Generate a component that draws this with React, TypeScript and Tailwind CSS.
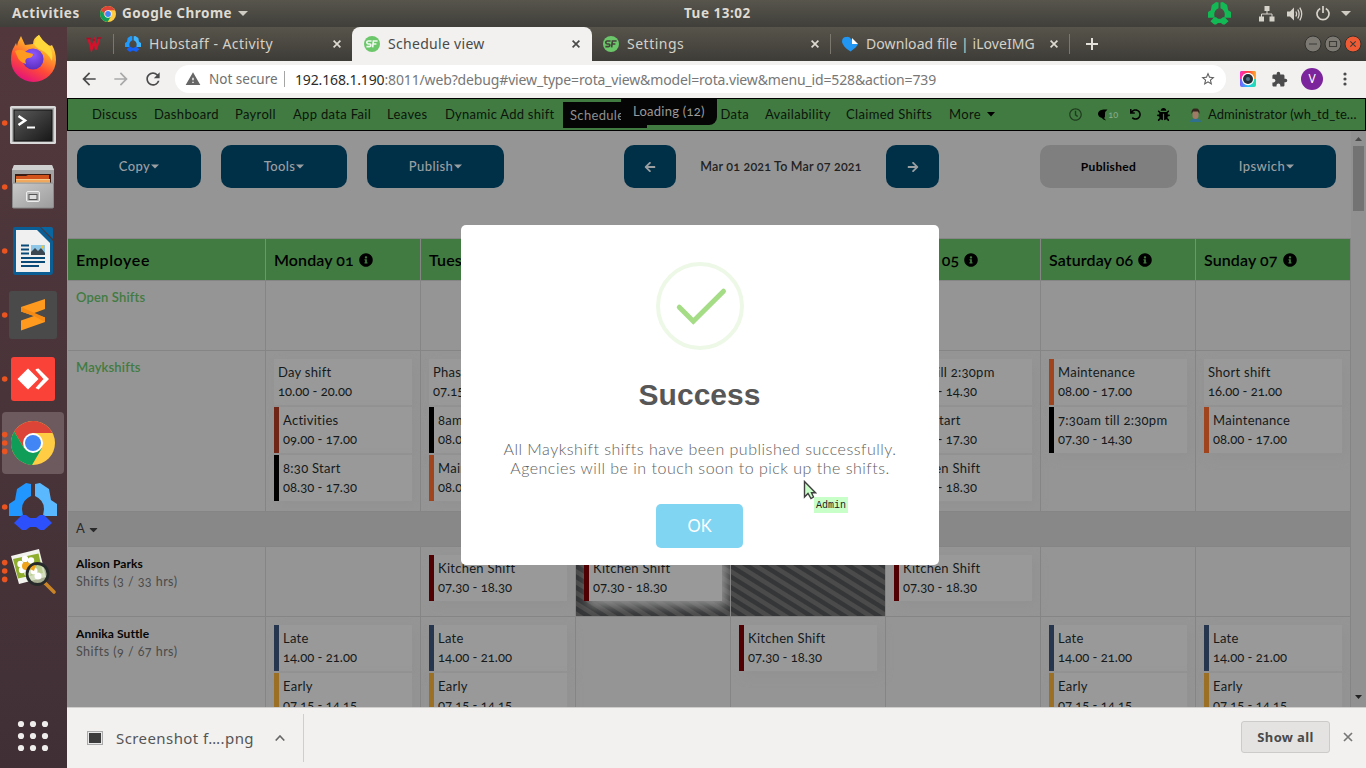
import React from "react";
import {
  FaArrowLeft,
  FaArrowRight,
  FaBug,
  FaCaretDown,
  FaInfoCircle,
  FaRegClock,
  FaUndo,
} from "react-icons/fa";
import { MdArrowBack, MdArrowForward, MdExtension, MdRefresh, MdStarBorder, MdWarning } from "react-icons/md";

const ubuntu = "font-['Noto_Sans','Open_Sans',sans-serif]";
const raleway = "font-['Lato',sans-serif]";

/* ---------- Logos ---------- */

function ChromeMark() {
  return (
    <>
      <circle cx="22" cy="22" r="22" fill="#fc4" />
      <path d="M22 12 H41.6 L38 7 A22 22 0 0 0 3.2 10.6 L13 27 Z" fill="#db4437" />
      <path d="M3.2 10.6 A22 22 0 0 0 21 44 L31 27 L22 31 L13 27 Z" fill="#0f9d58" />
      <circle cx="22" cy="22" r="10" fill="#fff" />
      <circle cx="22" cy="22" r="8" fill="#4285f4" />
    </>
  );
}

function RingMark({ a, b, c }: { a: string; b: string; c: string }) {
  return (
    <>
      <path d="M8 6 L17 0 L22 1 V13 Q13 17 13 26 L14 33 H0 V21 L6 17 Z" fill={a} />
      <path d="M40 6 L31 0 L26 1 V13 Q35 17 35 26 L34 33 H48 V21 L42 17 Z" fill={b} />
      <path d="M5 40 L13 32 H17 L21 35 H27 L31 32 H35 L43 40 L35 47 H31 L27 44 H21 L17 47 H13 Z" fill={c} />
    </>
  );
}

function Ring({ size, a, b, c }: { size: number; a: string; b: string; c: string }) {
  return (
    <svg width={size} height={size} viewBox="0 0 48 48" className="shrink-0">
      <RingMark a={a} b={b} c={c} />
    </svg>
  );
}

function SfLogo({ dark }: { dark?: boolean }) {
  return (
    <svg width="16" height="16" viewBox="0 0 16 16" className="shrink-0">
      <circle cx="8" cy="8" r="8" fill="#6cc76a" />
      <path
        d="M7.6 5 H4 Q2.7 5.2 2.8 6.6 Q3 8 4.5 8 H6 Q7 8.2 6.8 9.4 Q6.6 10.6 5.4 10.6 H2.4 M8.6 11.4 L9.4 5 H13.6 M9.2 8 H12.4"
        fill="none"
        stroke={dark ? "#46443d" : "#eefaee"}
        strokeWidth="1.7"
      />
    </svg>
  );
}

function Cross({ color }: { color: string }) {
  return (
    <svg width="8" height="8" viewBox="0 0 8 8" className="shrink-0">
      <path d="M0.6 0.6 L7.4 7.4 M7.4 0.6 L0.6 7.4" stroke={color} strokeWidth="1.7" />
    </svg>
  );
}

/* ---------- Desktop top bar ---------- */

function TopBar() {
  return (
    <header
      className={`flex h-[27px] shrink-0 items-center bg-gradient-to-b from-[#57554c] to-[#403f3a] text-[13.5px] font-bold tracking-[0.5px] text-[#dfdbd2] ${ubuntu}`}
    >
      <div className="w-[100px] pl-3">Activities</div>
      <svg width="16" height="16" viewBox="0 0 44 44" className="shrink-0">
        <ChromeMark />
      </svg>
      <div className="ml-1.5 w-[116px] whitespace-nowrap">Google Chrome</div>
      <svg width="10" height="5" viewBox="0 0 10 5">
        <path d="M0 0 H10 L5 5 Z" fill="#cfccc4" />
      </svg>
      <div className="ml-[436px] w-[520px]">Tue 13:02</div>
      <div className="ml-[3.5px] flex w-[51px]">
        <Ring size={23} a="#12b955" b="#12b955" c="#12b955" />
      </div>
      <div className="flex items-center">
        <svg width="16" height="16" viewBox="0 0 16 16">
          <path d="M5.5 0 h5 v5 h-5z M0 10.5 h5 v5 h-5z M10.5 10.5 h5 v5 h-5z" fill="#d6d3cb" />
          <path d="M8 5 V8 M2.5 11 V8 H13 V11" fill="none" stroke="#d6d3cb" />
        </svg>
        <svg width="16" height="14" viewBox="0 0 16 14" className="ml-3">
          <path d="M0 4.5 H3 L7 0.5 V13.5 L3 9.5 H0 Z" fill="#d6d3cb" />
          <path d="M8.8 4.5 Q10.4 7 8.8 9.5 M10.8 2.5 Q13.4 7 10.8 11.5 M12.8 0.6 Q16.6 7 12.8 13.4" fill="none" stroke="#d6d3cb" strokeWidth="1.3" />
        </svg>
        <svg width="14" height="15" viewBox="0 0 14 15" className="ml-[13px]">
          <path d="M4.2 2.4 A6 6 0 1 0 9.8 2.4 M7 0 V7" fill="none" stroke="#d6d3cb" strokeWidth="1.7" />
        </svg>
        <svg width="10" height="5" viewBox="0 0 10 5" className="ml-[11px]">
          <path d="M0 0 H10 L5 5 Z" fill="#cfccc4" />
        </svg>
      </div>
    </header>
  );
}

/* ---------- Dock ---------- */

function Slot({ dots, children }: { dots: number; children: React.ReactNode }) {
  const ys = dots === 1 ? [32] : dots === 3 ? [23.6, 32, 40.4] : [];
  return (
    <svg width="67" height="64" viewBox="0 0 67 64" className="shrink-0">
      {children}
      {ys.map((y) => (
        <circle key={y} cx="4.7" cy={y} r="2.8" fill="#e95420" />
      ))}
    </svg>
  );
}

function Dock() {
  return (
    <nav className="flex w-[67px] shrink-0 flex-col bg-gradient-to-b from-[#52383c] to-[#403036]">
      <Slot dots={0}>
        <defs>
          <linearGradient id="ff" x1="0.8" y1="0" x2="0.3" y2="1">
            <stop offset="0" stopColor="#fff44f" />
            <stop offset="0.35" stopColor="#ffa02a" />
            <stop offset="0.65" stopColor="#ff4a38" />
            <stop offset="1" stopColor="#e3107f" />
          </linearGradient>
          <radialGradient id="ffp" cx="0.5" cy="0.3" r="0.7">
            <stop offset="0" stopColor="#9059ff" />
            <stop offset="1" stopColor="#5b2fc0" />
          </radialGradient>
        </defs>
        <path d="M18 15 L21 9 L25 18 L33 17 Q33 11 39 8 Q42 13 47 17 Q50 20 52 18 Q56 25 56 33 A22.5 22 0 0 1 11 33 Q11 24 14 20 L16 16 L17 19 Z" fill="url(#ff)" />
        <circle cx="33" cy="32" r="10.5" fill="url(#ffp)" />
        <path d="M15 24 Q22 21 26 25 L33 27 Q33 31 28 31 Q24 32 26 37 Q19 35 17 29 Z" fill="#ff9a20" />
        <path d="M34 17 Q36 10 39 8 Q42 14 47 17 Q54 24 52 34 Q48 26 41 23 Q36 21 34 17Z" fill="#ffd83c" />
      </Slot>
      <Slot dots={1}>
        <defs>
          <linearGradient id="tm" x1="0" y1="0" x2="1" y2="1">
            <stop offset="0" stopColor="#5a5a5a" />
            <stop offset="0.5" stopColor="#393939" />
            <stop offset="1" stopColor="#171717" />
          </linearGradient>
        </defs>
        <rect x="10" y="15" width="46" height="38" rx="1.5" fill="#d9d9d9" />
        <rect x="12" y="17" width="42" height="34" fill="#a9a9a9" />
        <rect x="14" y="19" width="38" height="31" fill="url(#tm)" stroke="#111" />
        <path d="M18.5 25 L25 29.5 L18.5 34" fill="none" stroke="#fff" strokeWidth="2.6" />
        <path d="M27 36.5 H35" stroke="#fff" strokeWidth="2" />
      </Slot>
      <Slot dots={1}>
        <defs>
          <linearGradient id="fl" x1="0" y1="0" x2="1" y2="1">
            <stop offset="0" stopColor="#c9c9c9" />
            <stop offset="1" stopColor="#9c9c9c" />
          </linearGradient>
        </defs>
        <path d="M14 10 H52 L54 15 V50 H12 V15 Z" fill="#a2a2a2" />
        <path d="M14 10 H52 L54 15 H12 Z" fill="#cfcfcf" />
        <rect x="15" y="19" width="36" height="10" fill="#3a1c14" />
        <path d="M16 21 H26 L28 20 H49 V29 H16Z" fill="#d2531b" />
        <path d="M16 24 H50 V29 H16Z" fill="#f5c98c" />
        <path d="M16 26 H50" stroke="#e8862f" />
        <rect x="12.5" y="28" width="41" height="25" rx="1" fill="url(#fl)" stroke="#8a8a8a" />
        <rect x="26.5" y="36.5" width="13" height="10" rx="1.5" fill="#bbb" stroke="#ededed" />
        <rect x="29" y="39.5" width="8" height="5" fill="#ddd" stroke="#555" />
      </Slot>
      <Slot dots={1}>
        <path d="M15 8 H40 L53 22 V53 Q53 56 50 56 H16 Q13 56 13 53 V10 Q13 8 15 8Z" fill="#0a5e93" />
        <path d="M16 11 H37 L50 24 V53 H16Z" fill="#f0f0f0" />
        <path d="M41 8 H51 Q53 8 53 10 V20Z" fill="#0a66a0" />
        <path d="M21 26.5 H29 M21 30.5 H29 M21 34.5 H29 M21 39 H45 M21 43 H45 M21 47 H39" stroke="#0a4a78" strokeWidth="2" />
        <rect x="31" y="26" width="14" height="10" fill="#8ec7e8" />
        <path d="M31 36 V33 L35 29 L38 32 L41 29 L45 34 V36Z" fill="#3b4650" />
        <circle cx="42.5" cy="28" r="1.5" fill="#f3c52f" />
      </Slot>
      <Slot dots={1}>
        <rect x="9" y="8" width="48" height="48" rx="3" fill="#4a4a4a" />
        <path d="M21 24 L45 16 V26 L33 30.5 L45 34.5 V39 L21 47.5 V37.5 L34 33 L21 28.5Z" fill="#ff9a1f" />
        <path d="M21 28.5 V24 L45 34.5 V39 L34 33Z" fill="#f58a14" />
      </Slot>
      <Slot dots={1}>
        <rect x="11" y="10" width="44" height="44" rx="3" fill="#fb4238" />
        <path d="M17.5 32 L28 21.5 L38.5 32 L28 42.5Z" fill="#fff" />
        <path d="M36 22 L38.5 21.5 L49 32 L38.5 42.5 L35.5 41 L43.5 32 L35.5 23Z" fill="#fff" />
      </Slot>
      <Slot dots={3}>
        <rect x="2" y="1" width="62" height="62" rx="4" fill="#6d5a5f" />
        <g transform="translate(11 10)">
          <ChromeMark />
        </g>
      </Slot>
      <Slot dots={1}>
        <g transform="translate(9 8)">
          <RingMark a="#2196ff" b="#5ab8ff" c="#2c50fb" />
        </g>
      </Slot>
      <Slot dots={3}>
        <path d="M11 17 L39 10 L46 38 L19 45Z" fill="#f3f3ee" />
        <path d="M13 20 L38.5 14.5 L43 34 L18 39.5Z" fill="#8fae2e" />
        <g fill="#fff">
          <circle cx="25" cy="20" r="3.2" />
          <circle cx="31" cy="21.5" r="3.2" />
          <circle cx="20.5" cy="25" r="3.2" />
          <circle cx="22" cy="31" r="3.2" />
          <circle cx="27.5" cy="34" r="3.2" />
        </g>
        <circle cx="26" cy="27" r="4" fill="#f0a31c" />
        <path d="M45 44 L54 53" stroke="#c98428" strokeWidth="3.6" strokeLinecap="round" />
        <circle cx="37.5" cy="35" r="10.5" fill="#c9d8b0" fillOpacity="0.75" stroke="#272a2a" strokeWidth="2.8" />
        <circle cx="34" cy="32" r="3.5" fill="#fff" />
        <circle cx="38" cy="37" r="3.5" fill="#fff" />
        <path d="M30 30 q2 -4 6 -4 l-2 6z" fill="#f0a31c" />
      </Slot>
      <div className="flex-1" />
      <svg width="67" height="64" viewBox="0 0 67 64" className="shrink-0">
        {[20, 32, 44].map((y) =>
          [21, 33, 45].map((x) => <circle key={`${x}-${y}`} cx={x} cy={y} r="3.1" fill="#f0eeec" />),
        )}
      </svg>
    </nav>
  );
}

/* ---------- Browser chrome ---------- */

function TabStrip() {
  return (
    <div
      className={`flex h-[34px] shrink-0 items-center bg-gradient-to-b from-[#57544b] to-[#3e3c37] text-[14px] whitespace-nowrap text-[#d5d1c8] ${ubuntu}`}
    >
      <svg width="16" height="16" viewBox="0 0 16 16" className="ml-[19px]">
        <path d="M2.5 2.5 L5.5 13.5 L8.5 5 L10 13.5 L13 3" fill="none" stroke="#d3122c" strokeWidth="2.4" />
        <path d="M0.5 2.5 H5.5 M11 2 H15.5 M6.5 4 H9" stroke="#b00d24" strokeWidth="1.6" />
      </svg>
      <div className="ml-[11px] h-5 w-px bg-[#7a776f]" />
      <div className="ml-[11px] flex w-[227px] items-center">
        <Ring size={16} a="#1f9bff" b="#3db4ff" c="#1560f5" />
        <span className="ml-2 w-[184px] pb-0.5 tracking-[0.43px]">Hubstaff - Activity</span>
        <Cross color="#dedad2" />
      </div>
      <div className="flex h-full w-[240px] items-center rounded-t-lg bg-[#f2f1f0] pl-3 text-[#4a4a48]">
        <SfLogo />
        <span className="ml-2 w-[184px] pb-0.5 tracking-[0.3px]">Schedule view</span>
        <Cross color="#4a4a48" />
      </div>
      <div className="flex w-[238px] items-center pl-[11px]">
        <SfLogo dark />
        <span className="ml-2 w-[184px] pb-0.5 tracking-[0.5px]">Settings</span>
        <Cross color="#dedad2" />
      </div>
      <div className="h-5 w-px bg-[#7a776f]" />
      <div className="flex w-[238px] items-center pl-[11px]">
        <svg width="17" height="16" viewBox="0 0 17 16" className="shrink-0">
          <path d="M0 6 Q0 1 4 1 Q7 0 9 3 L16 8 Q15 11 8.5 15.5 Q1 11 0 6Z" fill="#2196f3" />
          <path d="M10 2 L16 8 H10Z" fill="#fff" />
        </svg>
        <span className="ml-[7px] w-[184px] pb-0.5 tracking-[0.08px]">Download file | iLoveIMG</span>
        <Cross color="#dedad2" />
      </div>
      <div className="h-5 w-px bg-[#7a776f]" />
      <svg width="12" height="12" viewBox="0 0 12 12" className="ml-4">
        <path d="M6 0 V12 M0 6 H12" stroke="#e4e1da" strokeWidth="2" />
      </svg>
      <svg width="58" height="18" viewBox="0 0 58 18" className="ml-[206px]">
        <circle cx="9" cy="9" r="8" fill="#7b7971" stroke="#33322e" />
        <circle cx="29" cy="9" r="8" fill="#7b7971" stroke="#33322e" />
        <circle cx="49" cy="9" r="8" fill="#ef5b35" stroke="#33322e" />
        <path d="M5 9 H13 M25.5 6.5 H32.5 V11.5 H25.5Z M46.3 6.3 L51.7 11.7 M51.7 6.3 L46.3 11.7" fill="none" stroke="#3c3b37" strokeWidth="1.1" />
      </svg>
    </div>
  );
}

function AddressBar() {
  return (
    <div className={`flex h-[37px] shrink-0 items-center bg-[#f2f1f0] pb-px text-[14px] whitespace-nowrap ${ubuntu}`}>
      <MdArrowBack className="ml-3 size-5 text-[#4b4b4b]" />
      <MdArrowForward className="ml-3 size-5 text-[#a9a9a9]" />
      <MdRefresh className="ml-3 size-5 text-[#4b4b4b]" />
      <div className="ml-3 flex h-7 w-[1051px] items-center rounded-full bg-white pr-2.5 pl-2.5">
        <MdWarning className="size-4 text-[#666]" />
        <span className="ml-2 w-[75px] text-[13.5px] text-[#70706f]">Not secure</span>
        <div className="h-4 w-px bg-[#a5a5a5]" />
        <span className="ml-2.5 flex-1 tracking-[-0.145px] text-[#777]">
          <span className="text-[#2c2c2c]">192.168.1.190</span>
          :8011/web?debug#view_type=rota_view&amp;model=rota.view&amp;menu_id=528&amp;action=739
        </span>
        <MdStarBorder className="size-4 text-[#5f5f5f]" />
      </div>
      <svg width="16" height="16" viewBox="0 0 16 16" className="ml-3.5">
        <defs>
          <linearGradient id="camTop" x1="0" y1="0" x2="1" y2="0">
            <stop offset="0" stopColor="#ff2dc0" />
            <stop offset="0.5" stopColor="#ff3a3a" />
            <stop offset="1" stopColor="#ffb02a" />
          </linearGradient>
          <linearGradient id="camBottom" x1="0" y1="0" x2="1" y2="0">
            <stop offset="0" stopColor="#7a5cff" />
            <stop offset="0.5" stopColor="#22c7f5" />
            <stop offset="1" stopColor="#23e0a0" />
          </linearGradient>
        </defs>
        <rect width="16" height="16" rx="2" fill="url(#camBottom)" />
        <path d="M2 0 H14 Q16 0 16 2 V8 H0 V2 Q0 0 2 0Z" fill="url(#camTop)" />
        <circle cx="8" cy="8" r="6.2" fill="#fff" />
        <circle cx="8" cy="8" r="5" fill="#222f38" />
        <circle cx="8" cy="8" r="2" fill="#4f7183" />
      </svg>
      <MdExtension className="ml-[15px] size-[17px] text-[#4b4b4b]" />
      <div className="ml-[13px] flex size-[22px] items-center justify-center rounded-full bg-[#7b249c] text-[12px] text-white">V</div>
      <svg width="4" height="14" viewBox="0 0 4 14" className="ml-5">
        <circle cx="2" cy="2" r="1.6" fill="#4b4b4b" />
        <circle cx="2" cy="7" r="1.6" fill="#4b4b4b" />
        <circle cx="2" cy="12" r="1.6" fill="#4b4b4b" />
      </svg>
    </div>
  );
}

/* ---------- Web application ---------- */

function AppNav() {
  return (
    <div className="relative flex h-[33px] shrink-0 items-center border border-black bg-[#417b41] pl-6 text-[13px] tracking-[0.33px] whitespace-nowrap text-[#0b150b]">
      <span className="w-[62px]">Discuss</span>
      <span className="w-[81px]">Dashboard</span>
      <span className="w-[58px]">Payroll</span>
      <span className="w-[94px]">App data Fail</span>
      <span className="w-[58px]">Leaves</span>
      <span className="w-[118px] tracking-[0.26px]">Dynamic Add shift</span>
      <span className="h-[26px] w-[84px] bg-[#050505] pl-[7px] leading-[26px] text-[#8f8f8f]">Schedule</span>
      <span className="w-[102px] text-right">y Data</span>
      <span className="ml-4 w-[81px]">Availability</span>
      <span className="w-[103px]">Claimed Shifts</span>
      <span>More</span>
      <svg width="8" height="5" viewBox="0 0 8 5" className="ml-1.5">
        <path d="M0 0 H8 L4 4.6Z" fill="#000" />
      </svg>
      <div className="ml-auto flex items-center">
        <FaRegClock className="size-[13px] text-[#1f3b1f]" />
        <svg width="10" height="12" viewBox="0 0 10 12" className="ml-4">
          <path d="M9.5 0.6 Q6.6 2.6 7 5.4 Q7.4 8 6 9 Q7 10.4 8.2 11.4 Q5 11.2 3.6 8.8 Q0 8 0 4.6 Q0.4 0.8 5.4 0.4Z" fill="#000" />
        </svg>
        <span className="text-[9px] tracking-[0px] text-[#8fae8f]">10</span>
        <FaUndo className="ml-[12px] size-[11px] text-black" />
        <FaBug className="ml-4 size-[13px] text-black" />
        <svg width="11" height="14" viewBox="0 0 11 14" className="mr-[7px] ml-5">
          <path d="M0 14 Q0 10.5 5.5 10.5 Q11 10.5 11 14Z" fill="#2f6f8f" />
          <rect x="2.5" y="2.5" width="6" height="8.5" rx="3" fill="#a07a66" />
          <path d="M1.5 6 Q1 0 5.5 0.5 Q10 0 9.5 6 L8 3.5 H3Z" fill="#33241e" />
        </svg>
        <span className="w-[157px] tracking-[0.07px]">Administrator (wh_td_te…</span>
      </div>
      <div className="absolute top-0 left-[553px] h-[26px] w-[96px] rounded-br-lg bg-[#050505] pl-3 leading-[25px] tracking-[0.25px] text-[#9a9a9a]">
        Loading (12)
      </div>
    </div>
  );
}

function NavyButton({ className, children }: { className: string; children: React.ReactNode }) {
  return (
    <div
      className={`flex h-[43px] shrink-0 items-center justify-center rounded-[10px] bg-[#003048] text-[13px] font-medium tracking-[0.4px] text-[#9c9fa1] ${className}`}
    >
      {children}
    </div>
  );
}

function Caret() {
  return (
    <svg width="8" height="5" viewBox="0 0 8 5" className="ml-[1px]">
      <path d="M0 0.4 H8 L4 4.6Z" fill="currentColor" />
    </svg>
  );
}

function Toolbar() {
  return (
    <div className="flex h-[107px] shrink-0 items-start pt-3.5 pl-2.5">
      <NavyButton className="w-[124px]">
        Copy
        <Caret />
      </NavyButton>
      <NavyButton className="ml-5 w-[126px]">
        Tools
        <Caret />
      </NavyButton>
      <NavyButton className="ml-5 w-[137px]">
        Publish
        <Caret />
      </NavyButton>
      <NavyButton className="ml-[120px] w-[52px]">
        <FaArrowLeft className="size-3" />
      </NavyButton>
      <div className="w-[210px] text-center text-[12.5px] leading-[43px] font-semibold tracking-[0.18px] whitespace-nowrap text-[#222]">
        Mar 01 2021 To Mar 07 2021
      </div>
      <NavyButton className="w-[53px]">
        <FaArrowRight className="size-3" />
      </NavyButton>
      <div className="ml-[101px] h-[43px] w-[137px] rounded-[10px] bg-[#7f7f7f] text-center text-[12px] leading-[43px] font-bold tracking-[0.35px] text-black">
        Published
      </div>
      <NavyButton className="ml-5 w-[139px]">
        Ipswich
        <Caret />
      </NavyButton>
    </div>
  );
}

interface Shift {
  name: string;
  time: string;
  bar?: string;
}

const red = "bg-[#500003]";
const orange = "bg-[#9f441c]";
const rust = "bg-[#702617]";
const black = "bg-black";
const navy = "bg-[#27364f]";
const amber = "bg-[#9c7024]";

const late: Shift = { name: "Late", time: "14.00 - 21.00", bar: navy };
const early: Shift = { name: "Early", time: "07.15 - 14.15", bar: amber };
const kitchen: Shift = { name: "Kitchen Shift", time: "07.30 - 18.30", bar: red };
const maintenance: Shift = { name: "Maintenance", time: "08.00 - 17.00", bar: orange };
const half: Shift = { name: "7:30am till 2:30pm", time: "07.30 - 14.30", bar: black };
const start: Shift = { name: "8:30 Start", time: "08.30 - 17.30", bar: black };

const days = ["Monday 01", "Tuesday 02", "Wednesday 03", "Thursday 04", "Friday 05", "Saturday 06", "Sunday 07"];

const open: Shift[][] = [[], [], [], [], [], [], []];
const mayk: Shift[][] = [
  [{ name: "Day shift", time: "10.00 - 20.00" }, { name: "Activities", time: "09.00 - 17.00", bar: rust }, start],
  [{ name: "Phase", time: "07.15 - 14.15" }, { name: "8am", time: "08.00 - 17.00", bar: black }, maintenance],
  [],
  [],
  [{ name: "7:30 till 2:30pm", time: "07.30 - 14.30" , bar: black }, start, kitchen],
  [maintenance, half],
  [{ name: "Short shift", time: "16.00 - 21.00" }, maintenance],
];
const alison: Shift[][] = [[], [kitchen], [kitchen], [], [kitchen], [], []];
const annika: Shift[][] = [[late, early], [late, early], [], [kitchen], [], [late, early], [late, early]];

function Card({ shift }: { shift: Shift }) {
  return (
    <div className="flex h-[46px] w-[138px] shrink-0 bg-[#999] shadow-[5px_5px_10px_#929292]">
      {shift.bar && <div className={`w-[5px] ${shift.bar}`} />}
      <div className="pt-[4px] pl-1 text-[13px] leading-[19px] tracking-[0.28px] whitespace-nowrap text-[#15191b]">
        <div>{shift.name}</div>
        <div className="tracking-[0.02px]">{shift.time}</div>
      </div>
    </div>
  );
}

function Row({ className, label, shifts, hatched = [] }: { className: string; label: React.ReactNode; shifts: Shift[][]; hatched?: number[] }) {
  return (
    <div className={`flex shrink-0 overflow-hidden border-b border-[#858585] ${className}`}>
      <div className="w-[197px] shrink-0 pt-2 pl-2">{label}</div>
      {shifts.map((list, i) => (
        <div
          key={i}
          className={`flex w-[155px] shrink-0 flex-col gap-0.5 border-l border-[#858585] pt-2 pl-2 ${
            hatched.includes(i)
              ? "overflow-hidden bg-[repeating-linear-gradient(32deg,#4b4b4b_0px,#4b4b4b_3.5px,#353637_4.5px,#353637_8px,#4b4b4b_9px)]"
              : ""
          }`}
        >
          {list.map((s) => (
            <Card key={s.name} shift={s} />
          ))}
        </div>
      ))}
    </div>
  );
}

function Person({ name, detail }: { name: string; detail: string }) {
  return (
    <div className="leading-[17.5px]">
      <div className="text-[12px] font-bold tracking-[0.1px] text-[#050505]">{name}</div>
      <div className="text-[12.5px] tracking-[0.45px] text-[#4a4a4a]">{detail}</div>
    </div>
  );
}

function Schedule() {
  return (
    <div className="ml-px flex w-[1283px] flex-1 flex-col overflow-hidden border-t border-r border-[#858585]">
      <div className="flex h-[42px] shrink-0 items-center border-b border-[#858585] bg-[#417b41] text-[16px] font-semibold tracking-[0.1px] text-black">
        <div className="w-[197px] shrink-0 pl-2 tracking-[0.6px]">Employee</div>
        {days.map((d) => (
          <div key={d} className="flex h-full w-[155px] shrink-0 items-center border-l border-[#858585] pl-2 whitespace-nowrap">
            {d}
            <FaInfoCircle className="ml-[5px] size-[14px]" />
          </div>
        ))}
      </div>
      <Row
        className="h-[70px]"
        label={<div className="text-[13px] leading-[17.5px] font-semibold tracking-[0.15px] text-[#417b41]">Open Shifts</div>}
        shifts={open}
      />
      <Row
        className="h-[161px]"
        label={<div className="text-[13px] leading-[17.5px] font-semibold tracking-[0.15px] text-[#417b41]">Maykshifts</div>}
        shifts={mayk}
      />
      <div className="flex h-[35px] shrink-0 items-center border-b border-[#858585] bg-[#888] pl-2 text-[13px] text-[#2a2a2a]">
        A
        <FaCaretDown className="ml-0.5 size-[13px]" />
      </div>
      <Row className="h-[70px]" label={<Person name="Alison Parks" detail="Shifts (3 / 33 hrs)" />} shifts={alison} hatched={[2, 3]} />
      <Row className="h-[140px]" label={<Person name="Annika Suttle" detail="Shifts (9 / 67 hrs)" />} shifts={annika} />
    </div>
  );
}

function Scrollbar() {
  return (
    <div className="flex w-[15px] flex-col items-center bg-[#919191]">
      <svg width="7" height="4" viewBox="0 0 7 4" className="mt-1.5">
        <path d="M0 4 L3.5 0 L7 4Z" fill="#4a4a4a" />
      </svg>
      <div className="mt-[5px] h-[65px] w-[11px] bg-[#737373]" />
      <svg width="7" height="4" viewBox="0 0 7 4" className="mt-auto mb-2">
        <path d="M0 0 L3.5 4 L7 0Z" fill="#222" />
      </svg>
    </div>
  );
}

function Modal() {
  return (
    <div className="absolute top-[127px] left-[394px] flex h-[340px] w-[478px] flex-col items-center rounded-[5px] bg-white pt-[37px]">
      <svg width="88" height="88" viewBox="0 0 88 88">
        <circle cx="44" cy="44" r="42" fill="none" stroke="#edf8e7" strokeWidth="4" />
        <path d="M23.3 45.2 L37.3 59.2 L67.5 29.2" fill="none" stroke="#a5dc86" strokeWidth="5" strokeLinecap="round" />
      </svg>
      <h2 className="mt-[25px] mr-px font-['Liberation_Sans',sans-serif] text-[30px] leading-10 font-bold text-[#575757]">Success</h2>
      <p className="mt-[25px] text-center text-[16px] leading-[18.5px] font-light tracking-[0.5px] whitespace-nowrap text-[#606060]">
        All Maykshift shifts have been published successfully.
        <br />
        Agencies will be in touch soon to pick up the shifts.
      </p>
      <div className="mt-[27px] mr-px h-11 w-[87px] rounded-[5px] bg-[#7fd5f2] text-center text-[16.5px] leading-[44px] text-white">OK</div>
    </div>
  );
}

function Pointer() {
  return (
    <div className="absolute top-[382px] left-[736px] flex">
      <svg width="14" height="20" viewBox="0 0 14 20">
        <path d="M1.5 1.5 V17 L5 13.5 L8 18.5 L10.5 17 L8.5 12.8 H12.5Z" fill="#c8ffc8" stroke="#404040" strokeWidth="1.4" />
      </svg>
      <div className="mt-[17px] -ml-[3px] h-4 w-[34px] bg-[#c8ffc8] pt-px text-center font-['Liberation_Mono',monospace] text-[10px] leading-4 text-[#222]">
        Admin
      </div>
    </div>
  );
}

function WebPage() {
  return (
    <div className={`relative flex h-[609px] shrink-0 flex-col overflow-hidden bg-[#959595] oldstyle-nums ${raleway}`}>
      <AppNav />
      <div className="flex min-h-0 flex-1">
        <div className="flex w-[1284px] flex-col">
          <Toolbar />
          <Schedule />
        </div>
        <Scrollbar />
      </div>
      <Modal />
      <Pointer />
    </div>
  );
}

function DownloadBar() {
  return (
    <div className={`flex flex-1 items-center border-t border-[#cfcecd] bg-[#f2f1f0] text-[15px] text-[#555] ${ubuntu}`}>
      <svg width="16" height="14" viewBox="0 0 16 14" className="ml-5">
        <rect x="0.5" y="0.5" width="15" height="13" fill="#e8e8e8" stroke="#aaa" />
        <rect x="2" y="2" width="12" height="10" fill="#3c3c3c" />
      </svg>
      <span className="ml-[13px] w-[159px] tracking-[0.42px] whitespace-nowrap">Screenshot f….png</span>
      <svg width="10" height="6" viewBox="0 0 10 6">
        <path d="M0.7 5.5 L5 1 L9.3 5.5" fill="none" stroke="#666" strokeWidth="1.6" />
      </svg>
      <div className="ml-[18px] h-12 w-px bg-[#cfcecd]" />
      <div className="mb-0.5 ml-auto h-8 w-[89px] rounded-[3px] border border-[#cdcbc9] bg-[#e4e3e1] text-center text-[13px] leading-[30px] font-bold tracking-[0.35px] text-[#4a4a4a]">
        Show all
      </div>
      <svg width="10" height="10" viewBox="0 0 10 10" className="mr-[13px] mb-0.5 ml-[13px]">
        <path d="M1 1 L9 9 M9 1 L1 9" stroke="#777" strokeWidth="1.7" />
      </svg>
    </div>
  );
}

export default function App() {
  return (
    <div className="flex h-[768px] w-[1366px] flex-col overflow-hidden">
      <TopBar />
      <div className="flex min-h-0 flex-1">
        <Dock />
        <main className="flex w-[1299px] flex-col">
          <TabStrip />
          <AddressBar />
          <WebPage />
          <DownloadBar />
        </main>
      </div>
    </div>
  );
}
